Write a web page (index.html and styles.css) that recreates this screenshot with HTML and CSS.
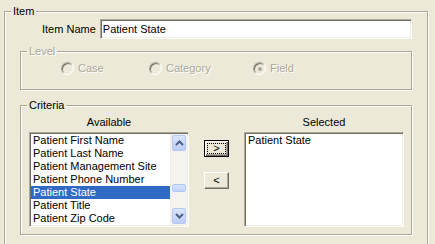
FILE: index.html
```html
<!DOCTYPE html>
<html lang="en">
<head>
    <meta charset="UTF-8">
    <meta name="viewport" content="width=device-width, initial-scale=1.0">
    <title>Item</title>
    <link rel="stylesheet" href="styles.css">
</head>
<body>

<fieldset class="group item">
    <legend>Item</legend>
    <div class="item-body">

        <div class="name-row">
            <label for="itemName">Item Name</label>
            <input type="text" id="itemName" class="textbox" value="Patient State">
        </div>

        <!-- Level is greyed out -->
        <fieldset class="group level disabled">
            <legend>Level</legend>
            <div class="radios">
                <span class="radio-opt"><span class="radio"></span>Case</span>
                <span class="radio-opt"><span class="radio"></span>Category</span>
                <span class="radio-opt"><span class="radio checked"></span>Field</span>
            </div>
        </fieldset>

        <fieldset class="group criteria">
            <legend>Criteria</legend>
            <div class="criteria-body">
                <div class="col-title">Available</div>
                <div></div>
                <div class="col-title">Selected</div>

                <div class="listbox">
                    <div class="options">
                        <div class="option">Patient First Name</div>
                        <div class="option">Patient Last Name</div>
                        <div class="option">Patient Management Site</div>
                        <div class="option">Patient Phone Number</div>
                        <div class="option selected">Patient State</div>
                        <div class="option">Patient Title</div>
                        <div class="option">Patient Zip Code</div>
                    </div>
                    <div class="scrollbar">
                        <div class="scroll-btn">
                            <svg width="9" height="6" viewBox="0 0 9 6"><path d="M1 5 L4.5 1.5 L8 5" fill="none" stroke="#4d6185" stroke-width="2"/></svg>
                        </div>
                        <div class="scroll-track"><div class="scroll-thumb"></div></div>
                        <div class="scroll-btn">
                            <svg width="9" height="6" viewBox="0 0 9 6"><path d="M1 1 L4.5 4.5 L8 1" fill="none" stroke="#4d6185" stroke-width="2"/></svg>
                        </div>
                    </div>
                </div>

                <div class="move-btns">
                    <button type="button" class="move-btn default"><span class="focus">&gt;</span></button>
                    <button type="button" class="move-btn">&lt;</button>
                </div>

                <div class="listbox">
                    <div class="options">
                        <div class="option">Patient State</div>
                    </div>
                </div>
            </div>
        </fieldset>

    </div>
</fieldset>

</body>
</html>
```

FILE: styles.css
```css
body {
    font-family: "Liberation Sans", Arial, sans-serif;
    font-size: 11px;
    color: #000;
    background-color: #ece9d8;
    margin: 0;
    padding: 4px 0 0 4px;
}

/* etched group box */
.group {
    margin: 0;
    padding: 0;
    min-width: 0;
    border: 1px solid #aca899;
    box-shadow: 1px 1px 0 #fff, inset 1px 1px 0 #fff;
}
.group legend {
    margin-left: 6px;
    padding: 0 2px;
    line-height: 14px;
    background-color: #ece9d8;
}
.item {
    width: 424px;
    box-sizing: border-box;
}
.item-body {
    padding: 1px 15px 10px 15px;
}

.name-row {
    display: flex;
    align-items: center;
    height: 20px;
    margin-left: 22px;
}
.name-row label {
    width: 58px;
}
.textbox {
    width: 313px;
    height: 20px;
    box-sizing: border-box;
    margin: 0;
    padding: 0 2px;
    font: inherit;
    color: #000;
    background-color: #fff;
    border: 1px solid;
    border-color: #aca899 #fff #fff #aca899;
    box-shadow: inset 1px 1px 0 #716f64, inset -1px -1px 0 #f1efe2;
    outline: none;
}

/* level */
.level {
    margin-top: 5px;
}
.disabled,
.disabled legend {
    color: #aca899;
    text-shadow: 1px 1px 0 #fff;
}
.radios {
    display: grid;
    grid-template-columns: 88px 104px auto;
    padding: 4px 0 14px 40px;
}
.radio-opt {
    display: flex;
    align-items: center;
    line-height: 13px;
}
.radio {
    position: relative;
    width: 11px;
    height: 11px;
    margin-right: 4px;
    border: 1px solid;
    border-color: #aca899 #fff #fff #aca899;
    border-radius: 50%;
    box-shadow: inset 1px 1px 0 #716f64, inset -1px -1px 0 #f1efe2;
}
.radio.checked::after {
    content: "";
    position: absolute;
    left: 4px;
    top: 4px;
    width: 4px;
    height: 4px;
    border-radius: 50%;
    background-color: #aca899;
}

/* criteria */
.criteria {
    margin-top: 8px;
}
.criteria-body {
    display: grid;
    grid-template-columns: 160px 25px 160px;
    column-gap: 15px;
    row-gap: 3px;
    padding: 4px 7px 7px 8px;
}
.col-title {
    text-align: center;
    line-height: 13px;
}
.listbox {
    display: flex;
    height: 95px;
    box-sizing: border-box;
    background-color: #fff;
    border: 1px solid;
    border-color: #aca899 #fff #fff #aca899;
    box-shadow: inset 1px 1px 0 #716f64, inset -1px -1px 0 #f1efe2;
    padding: 1px;
}
.options {
    flex: 1;
    min-width: 0;
}
.option {
    line-height: 13px;
    padding-left: 2px;
    white-space: nowrap;
}
.option.selected {
    background-color: #316ac5;
    color: #fff;
}

.scrollbar {
    width: 17px;
    box-sizing: border-box;
    display: flex;
    flex-direction: column;
    padding: 1px;
    background-color: #f4f3ee;
    border-left: 1px solid #eeede5;
}
.scroll-btn {
    height: 16px;
    box-sizing: border-box;
    display: flex;
    align-items: center;
    justify-content: center;
    border: 1px solid #b4c8f6;
    border-radius: 2px;
    background: linear-gradient(#dbe5fd, #bccdf7);
}
.scroll-track {
    flex: 1;
}
.scroll-thumb {
    margin-top: 33px;
    height: 8px;
    box-sizing: border-box;
    border: 1px solid #b4c8f6;
    border-radius: 2px;
    background: linear-gradient(#d7e2fc, #c3d3f9);
}

.move-btns {
    display: flex;
    flex-direction: column;
    gap: 15px;
    padding-top: 8px;
}
.move-btn {
    width: 25px;
    height: 17px;
    box-sizing: border-box;
    margin: 0;
    padding: 0;
    font: inherit;
    line-height: 11px;
    color: #000;
    background-color: #ece9d8;
    border: 1px solid;
    border-color: #fff #716f64 #716f64 #fff;
    box-shadow: inset -1px -1px 0 #aca899;
    cursor: pointer;
}
.move-btn.default {
    border-color: #000;
    box-shadow: inset 1px 1px 0 #fff, inset -1px -1px 0 #716f64, inset -2px -2px 0 #aca899;
    padding: 2px;
}
.focus {
    display: block;
    height: 11px;
    box-sizing: border-box;
    border: 1px dotted #000;
    line-height: 9px;
}
```
